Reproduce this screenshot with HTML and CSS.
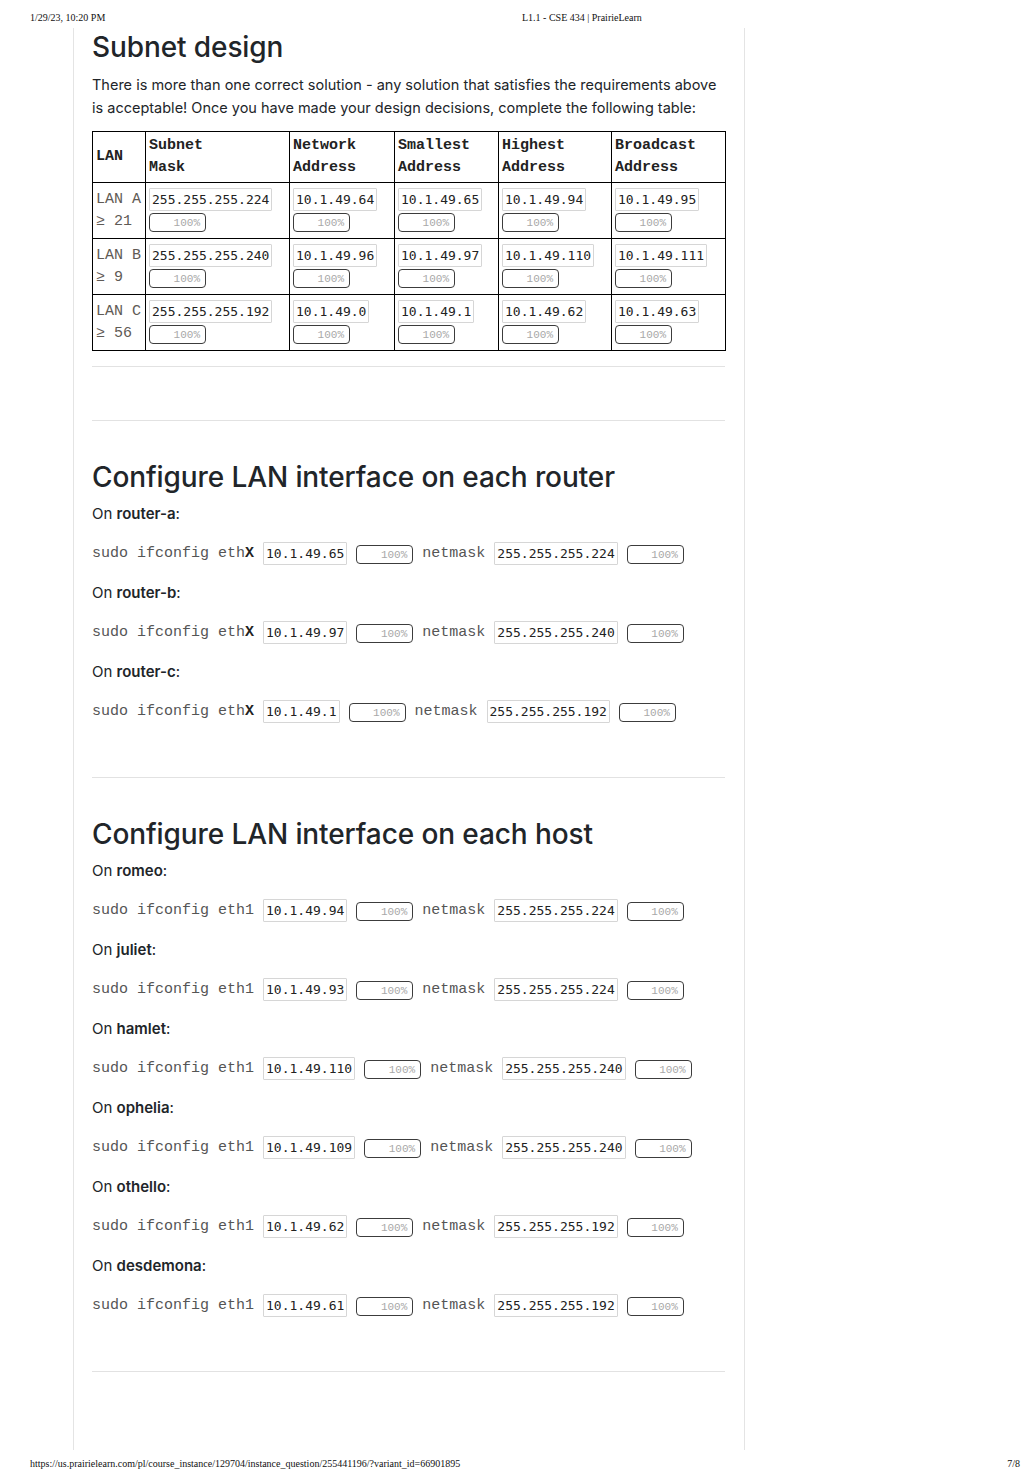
FILE: index.html
```html
<!DOCTYPE html>
<html>
<head>
<meta charset="utf-8">
<title>L1.1 - CSE 434 | PrairieLearn</title>
<link rel="stylesheet" href="styles.css">
</head>
<body>
<div class="page">
  <header class="print-head">
    <span class="ph-date">1/29/23, 10:20 PM</span>
    <span class="ph-title">L1.1 - CSE 434 | PrairieLearn</span>
  </header>

  <main class="card">
    <section class="sec first">
      <h2>Subnet design</h2>
      <p class="lead">There is more than one correct solution - any solution that satisfies the requirements above is acceptable! Once you have made your design decisions, complete the following table:</p>
      <table class="subnets">
        <thead>
          <tr>
            <th class="c-lan">LAN</th>
            <th class="c-mask">Subnet<br>Mask</th>
            <th class="c-net">Network<br>Address</th>
            <th class="c-small">Smallest<br>Address</th>
            <th class="c-high">Highest<br>Address</th>
            <th class="c-bc">Broadcast<br>Address</th>
          </tr>
        </thead>
        <tbody>
          <tr>
            <td class="lan">LAN A<br>≥ 21</td>
            <td><div class="field"><span class="inp">255.255.255.224</span><span class="badge">100%</span></div></td>
            <td><div class="field"><span class="inp">10.1.49.64</span><span class="badge">100%</span></div></td>
            <td><div class="field"><span class="inp">10.1.49.65</span><span class="badge">100%</span></div></td>
            <td><div class="field"><span class="inp">10.1.49.94</span><span class="badge">100%</span></div></td>
            <td><div class="field"><span class="inp">10.1.49.95</span><span class="badge">100%</span></div></td>
          </tr>
          <tr>
            <td class="lan">LAN B<br>≥ 9</td>
            <td><div class="field"><span class="inp">255.255.255.240</span><span class="badge">100%</span></div></td>
            <td><div class="field"><span class="inp">10.1.49.96</span><span class="badge">100%</span></div></td>
            <td><div class="field"><span class="inp">10.1.49.97</span><span class="badge">100%</span></div></td>
            <td><div class="field"><span class="inp">10.1.49.110</span><span class="badge">100%</span></div></td>
            <td><div class="field"><span class="inp">10.1.49.111</span><span class="badge">100%</span></div></td>
          </tr>
          <tr>
            <td class="lan">LAN C<br>≥ 56</td>
            <td><div class="field"><span class="inp">255.255.255.192</span><span class="badge">100%</span></div></td>
            <td><div class="field"><span class="inp">10.1.49.0</span><span class="badge">100%</span></div></td>
            <td><div class="field"><span class="inp">10.1.49.1</span><span class="badge">100%</span></div></td>
            <td><div class="field"><span class="inp">10.1.49.62</span><span class="badge">100%</span></div></td>
            <td><div class="field"><span class="inp">10.1.49.63</span><span class="badge">100%</span></div></td>
          </tr>
        </tbody>
      </table>
    </section>
    <hr class="rule">
    <div class="spacer"></div>
    <hr class="rule">

    <section class="sec">
      <h2>Configure LAN interface on each router</h2>
      <p class="on">On <b>router-a</b>:</p>
      <div class="cmd"><code class="code">sudo ifconfig eth<b>X</b></code><span class="inp">10.1.49.65</span><span class="badge">100%</span><code class="code">netmask</code><span class="inp">255.255.255.224</span><span class="badge">100%</span></div>
      <p class="on">On <b>router-b</b>:</p>
      <div class="cmd"><code class="code">sudo ifconfig eth<b>X</b></code><span class="inp">10.1.49.97</span><span class="badge">100%</span><code class="code">netmask</code><span class="inp">255.255.255.240</span><span class="badge">100%</span></div>
      <p class="on">On <b>router-c</b>:</p>
      <div class="cmd"><code class="code">sudo ifconfig eth<b>X</b></code><span class="inp">10.1.49.1</span><span class="badge">100%</span><code class="code">netmask</code><span class="inp">255.255.255.192</span><span class="badge">100%</span></div>
    </section>
    <hr class="rule">

    <section class="sec">
      <h2>Configure LAN interface on each host</h2>
      <p class="on">On <b>romeo</b>:</p>
      <div class="cmd"><code class="code">sudo ifconfig eth1</code><span class="inp">10.1.49.94</span><span class="badge">100%</span><code class="code">netmask</code><span class="inp">255.255.255.224</span><span class="badge">100%</span></div>
      <p class="on">On <b>juliet</b>:</p>
      <div class="cmd"><code class="code">sudo ifconfig eth1</code><span class="inp">10.1.49.93</span><span class="badge">100%</span><code class="code">netmask</code><span class="inp">255.255.255.224</span><span class="badge">100%</span></div>
      <p class="on">On <b>hamlet</b>:</p>
      <div class="cmd"><code class="code">sudo ifconfig eth1</code><span class="inp">10.1.49.110</span><span class="badge">100%</span><code class="code">netmask</code><span class="inp">255.255.255.240</span><span class="badge">100%</span></div>
      <p class="on">On <b>ophelia</b>:</p>
      <div class="cmd"><code class="code">sudo ifconfig eth1</code><span class="inp">10.1.49.109</span><span class="badge">100%</span><code class="code">netmask</code><span class="inp">255.255.255.240</span><span class="badge">100%</span></div>
      <p class="on">On <b>othello</b>:</p>
      <div class="cmd"><code class="code">sudo ifconfig eth1</code><span class="inp">10.1.49.62</span><span class="badge">100%</span><code class="code">netmask</code><span class="inp">255.255.255.192</span><span class="badge">100%</span></div>
      <p class="on">On <b>desdemona</b>:</p>
      <div class="cmd"><code class="code">sudo ifconfig eth1</code><span class="inp">10.1.49.61</span><span class="badge">100%</span><code class="code">netmask</code><span class="inp">255.255.255.192</span><span class="badge">100%</span></div>
    </section>
    <hr class="rule">
  </main>

  <footer class="print-foot">
    <span class="pf-url">https://us.prairielearn.com/pl/course_instance/129704/instance_question/255441196/?variant_id=66901895</span>
    <span class="pf-page">7/8</span>
  </footer>
</div>
</body>
</html>
```

FILE: styles.css
```css
* { box-sizing: border-box; }

html, body {
  margin: 0;
  padding: 0;
  background: #ffffff;
}

body {
  font-family: Inter, "Noto Sans", "Liberation Sans", sans-serif;
  color: #212529;
}

.page {
  width: 1028px;
  height: 1483px;
  display: flex;
  flex-direction: column;
}

/* print header / footer */
.print-head {
  display: grid;
  grid-template-columns: 492px auto;
  padding: 12px 0 0 30px;
  height: 28px;
  font-family: "Liberation Serif", serif;
  font-size: 10px;
  line-height: 11px;
  color: #111;
}

.print-foot {
  margin-top: auto;
  display: flex;
  justify-content: space-between;
  padding: 0 8px 14px 30px;
  font-family: "Liberation Serif", serif;
  font-size: 10px;
  line-height: 11px;
  color: #111;
}

/* card */
.card {
  margin-left: 73px;
  width: 672px;
  height: 1422px;
  border-left: 1px solid #e4e4e4;
  border-right: 1px solid #e4e4e4;
  padding: 2px 19px 0 18px;
}

.sec {
  padding-top: 39px;
  padding-bottom: 37px;
}

.sec.first {
  padding-top: 0;
  padding-bottom: 15px;
}

h2 {
  margin: 0 0 9px 0;
  font-size: 28px;
  line-height: 34px;
  font-weight: 500;
  color: #212529;
  letter-spacing: -0.1px;
}

.lead {
  margin: 7px 0 12px 0;
  font-size: 14.5px;
  line-height: 23px;
}

.rule {
  border: 0;
  border-top: 1px solid #e2e2e2;
  margin: 0;
  height: 0;
}

.spacer {
  height: 53px;
}

/* table */
.subnets {
  width: 633px;
  border-collapse: collapse;
  table-layout: fixed;
  font-family: "Liberation Mono", "Courier New", monospace;
  font-size: 15px;
}

.subnets th,
.subnets td {
  border: 1px solid #000;
  padding: 5px 2px 5px 3px;
  text-align: left;
}

.subnets th {
  font-weight: bold;
  line-height: 22px;
  vertical-align: middle;
  padding-top: 3px;
  padding-bottom: 3px;
  color: #222;
}

.subnets td {
  vertical-align: top;
}

.c-lan { width: 53px; }
.c-mask { width: 144px; }
.c-net { width: 105px; }
.c-small { width: 104px; }
.c-high { width: 113px; }
.c-bc { width: 114px; }

.subnets td.lan {
  color: #5f5a55;
  line-height: 22px;
  padding-top: 6px;
}

.field {
  display: flex;
  flex-direction: column;
  align-items: flex-start;
  gap: 2px;
}

/* input lookalike */
.inp {
  display: inline-block;
  height: 23px;
  padding: 0 2px;
  border: 1px solid #d6d6d6;
  border-radius: 1px;
  background: #fff;
  font-family: "DejaVu Sans Mono", monospace;
  font-size: 13px;
  line-height: 21px;
  color: #222;
  white-space: nowrap;
}

.badge {
  display: inline-block;
  width: 57px;
  height: 19px;
  border: 1px solid #3c3c3c;
  border-radius: 4px;
  padding-right: 5px;
  text-align: right;
  font-family: "Liberation Mono", monospace;
  font-size: 11px;
  line-height: 18px;
  color: #a8a8a8;
}

/* command rows */
.on {
  margin: 0;
  font-size: 15px;
  line-height: 22px;
}

.on b {
  font-weight: 600;
}

.cmd {
  display: flex;
  align-items: center;
  gap: 9px;
  height: 24px;
  margin: 16px 0 17px 0;
}

.cmd .badge {
  margin-top: 2px;
}

.code {
  font-family: "Liberation Mono", "Courier New", monospace;
  font-size: 15px;
  color: #555;
  white-space: pre;
}

.code b {
  color: #222;
  font-weight: bold;
}
```
